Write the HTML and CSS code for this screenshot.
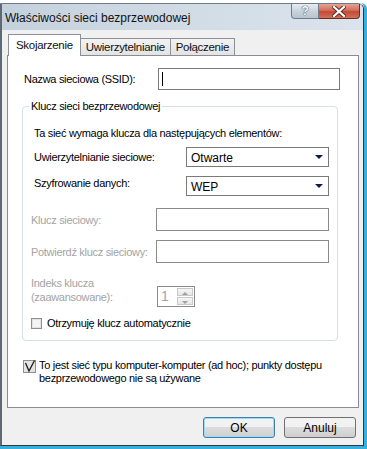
FILE: index.html
```html
<!DOCTYPE html>
<html>
<head>
    <meta charset="UTF-8">
    <title>Właściwości sieci bezprzewodowej</title>
    <link rel="stylesheet" href="styles.css">
</head>
<body>
<div class="top-strip"></div>
<div class="window">
    <div class="frame">
        <div class="titlebar">
            <span class="title">Właściwości sieci bezprzewodowej</span>
            <div class="caption-btns">
                <span class="btn-help">?</span>
                <span class="btn-close">
                    <svg width="14" height="11" viewBox="0 0 14 11">
                        <path d="M2 1 L12 10 M12 1 L2 10" stroke="#5a2a20" stroke-width="4" stroke-linecap="square"/>
                        <path d="M2 1 L12 10 M12 1 L2 10" stroke="#fff" stroke-width="2.2" stroke-linecap="square"/>
                    </svg>
                </span>
            </div>
        </div>

        <div class="content">
            <ul class="tabs">
                <li class="tab active">Skojarzenie</li>
                <li class="tab">Uwierzytelnianie</li>
                <li class="tab">Połączenie</li>
            </ul>

            <div class="panel">
                <div class="row ssid">
                    <label>Nazwa sieciowa (SSID):</label>
                    <div class="edit ssid-edit"><span class="caret"></span></div>
                </div>

                <div class="group">
                    <span class="legend">Klucz sieci bezprzewodowej</span>
                    <div class="intro">Ta sieć wymaga klucza dla następujących elementów:</div>

                    <div class="row r-auth">
                        <label>Uwierzytelnianie sieciowe:</label>
                        <div class="combo">Otwarte<span class="arrow"></span></div>
                    </div>
                    <div class="row r-enc">
                        <label>Szyfrowanie danych:</label>
                        <div class="combo">WEP<span class="arrow"></span></div>
                    </div>
                    <div class="row r-key">
                        <label class="disabled">Klucz sieciowy:</label>
                        <div class="edit key-edit"></div>
                    </div>
                    <div class="row r-confirm">
                        <label class="disabled">Potwierdź klucz sieciowy:</label>
                        <div class="edit key-edit"></div>
                    </div>
                    <div class="row r-index">
                        <label class="disabled">Indeks klucza<br>(zaawansowane):</label>
                        <div class="spin">
                            <span class="spin-val">1</span>
                            <div class="spin-btns">
                                <span class="spin-up"></span>
                                <span class="spin-down"></span>
                            </div>
                        </div>
                    </div>
                    <div class="row r-auto">
                        <span class="check auto-check"></span>
                        <span>Otrzymuję klucz automatycznie</span>
                    </div>
                </div>

                <div class="adhoc">
                    <span class="check adhoc-check">
                        <svg width="13" height="13" viewBox="0 0 13 13">
                            <path d="M2.5 3 L6 11 L11.5 0.5" fill="none" stroke="#1a1a1a" stroke-width="1.3"/>
                        </svg>
                    </span>
                    <span class="adhoc-text">To jest sieć typu komputer-komputer (ad hoc); punkty dostępu<br>bezprzewodowego nie są używane</span>
                </div>
            </div>

            <div class="buttons">
                <button class="btn default">OK</button>
                <button class="btn">Anuluj</button>
            </div>
        </div>
    </div>
</div>
</body>
</html>
```

FILE: styles.css
```css
* {
    margin: 0;
    padding: 0;
    box-sizing: border-box;
}

ul, li {
    list-style: none;
}

html, body {
    width: 100%;
    height: 100%;
    overflow: hidden;
}

body {
    background: #fff;
    font-family: "Liberation Sans", Arial, sans-serif;
    font-size: 11px;
    letter-spacing: -0.3px;
    color: #000;
}

.top-strip {
    height: 3px;
}

.window {
    width: 367px;
    height: 446px;
    border-right: 3px solid #38b0de;
    border-bottom: 3px solid #38b0de;
    border-top-right-radius: 6px;
}

.frame {
    height: 100%;
    display: flex;
    flex-direction: column;
    border-left: 2px solid #5d6a76;
    border-right: 1px solid #2e3a46;
    border-bottom: 1px solid #2e3a46;
    border-top: 1px solid #6d7c8a;
    border-top-right-radius: 6px;
    background: #f0f0f0;
}

/* title bar */
.titlebar {
    height: 26px;
    display: flex;
    justify-content: space-between;
    background: linear-gradient(to right, #c4d1dd, #d3dde7 60%, #dbe4ed);
    border-top-right-radius: 5px;
}

.title {
    padding: 7px 0 0 3px;
    font-size: 12px;
    letter-spacing: 0;
    color: #111;
}

.caption-btns {
    display: flex;
    margin-right: 3px;
    height: 15px;
}

.btn-help {
    width: 28px;
    height: 15px;
    border: 1px solid #707d8a;
    border-top: none;
    border-bottom-left-radius: 4px;
    background: linear-gradient(#e6ecf2, #c9d3dd 50%, #b8c4cf);
    color: #fff;
    font-weight: bold;
    font-size: 12px;
    text-align: center;
    line-height: 14px;
    text-shadow: 0 0 1px #333, 0 0 1px #333;
}

.btn-close {
    width: 41px;
    height: 15px;
    display: flex;
    align-items: center;
    justify-content: center;
    border: 1px solid #6e2c22;
    border-top: none;
    border-left: none;
    border-bottom-right-radius: 4px;
    background: linear-gradient(#e3a496, #d26f5c 45%, #c44a34 55%, #d0705a);
}

/* dialog content */
.content {
    flex: 1;
    padding: 4px 4px 0 5px;
    display: flex;
    flex-direction: column;
}

.tabs {
    display: flex;
    align-items: flex-end;
    height: 21px;
    padding-left: 1px;
    position: relative;
    z-index: 1;
}

.tab {
    height: 17px;
    padding: 2px 5px 0;
    border: 1px solid #8d9097;
    border-bottom: none;
    margin-left: -1px;
    background: linear-gradient(#f2f2f2, #e3e3e3);
    font-size: 11.5px;
    color: #111;
}

.tab.active {
    height: 22px;
    margin-bottom: -1px;
    padding: 4px 7px 0;
    background: #fff;
    margin-left: 0;
}

.tab.active + .tab {
    margin-left: 0;
    border-left: none;
}

.panel {
    height: 353px;
    border: 1px solid #898c95;
    background: #fff;
    padding: 12px 0 0 14px;
}

.row {
    display: flex;
    align-items: center;
}

.edit {
    border: 1px solid #7a7a7a;
    background: #fff;
}

.ssid {
    height: 22px;
}

.ssid label {
    width: 136px;
}

.ssid-edit {
    width: 182px;
    height: 22px;
    padding: 3px 0 0 3px;
}

.caret {
    display: block;
    width: 1px;
    height: 14px;
    background: #000;
}

/* group box */
.group {
    position: relative;
    margin-top: 16px;
    width: 316px;
    height: 235px;
    border: 1px solid #d5dfe5;
    border-radius: 4px;
    padding: 19px 0 0 9px;
}

.legend {
    position: absolute;
    left: 6px;
    top: -7px;
    padding: 0 2px;
    background: #fff;
    line-height: 13px;
}

.intro {
    height: 14px;
    line-height: 14px;
    padding-left: 2px;
}

.row label {
    padding-left: 2px;
}

.combo {
    position: relative;
    width: 143px;
    height: 20px;
    border: 1px solid #7a7a7a;
    padding: 3px 0 0 4px;
    font-size: 12px;
    letter-spacing: 0;
    line-height: 14px;
}

.arrow {
    position: absolute;
    right: 5px;
    top: 7px;
    border-left: 4px solid transparent;
    border-right: 4px solid transparent;
    border-top: 4px solid #0d1a4e;
}

.r-auth {
    margin-top: 7px;
    justify-content: space-between;
    width: 297px;
}

.r-enc {
    margin-top: 9px;
    justify-content: space-between;
    width: 297px;
    align-items: flex-start;
}

.r-enc label {
    padding-top: 1px;
}

.disabled {
    color: #a3a3a3;
}

.r-key, .r-confirm {
    justify-content: space-between;
    width: 297px;
}

.row .disabled {
    padding-left: 0;
    margin-left: -1px;
}

.r-key {
    margin-top: 12px;
}

.r-confirm {
    margin-top: 9px;
}

.key-edit {
    width: 173px;
    height: 23px;
    border-color: #8a8a8a;
}

.r-index {
    margin-top: 13px;
    height: 31px;
    align-items: flex-start;
}

.r-index label {
    width: 126px;
    line-height: 14px;
}

.spin {
    margin-top: 10px;
    width: 38px;
    height: 21px;
    display: flex;
    justify-content: space-between;
    border: 1px solid #8a8a8a;
    padding: 1px;
}

.spin-val {
    color: #a3a3a3;
    font-size: 14px;
    padding: 0 0 0 2px;
}

.spin-btns {
    width: 16px;
    display: flex;
    flex-direction: column;
    gap: 1px;
}

.spin-up, .spin-down {
    flex: 1;
    position: relative;
    border: 1px solid #c8c8c8;
    background: linear-gradient(#f6f6f6, #e6e6e6);
}

.spin-up::after, .spin-down::after {
    content: "";
    position: absolute;
    left: 4px;
    top: 3px;
    border-left: 3px solid transparent;
    border-right: 3px solid transparent;
}

.spin-up::after {
    border-bottom: 3px solid #a0a0a0;
}

.spin-down::after {
    border-top: 3px solid #a0a0a0;
}

.r-auto {
    margin-top: 9px;
    height: 14px;
}

.check {
    display: block;
    background: #f4f4f4;
}

.auto-check {
    width: 11px;
    height: 11px;
    margin: 0 5px 0 -1px;
    border: 1px solid #8e8f8f;
    box-shadow: inset 0 0 0 1px #e2e2e2;
}

/* ad hoc */
.adhoc {
    display: flex;
    align-items: flex-start;
    margin-top: 18px;
    margin-left: 1px;
}

.adhoc-check {
    position: relative;
    width: 13px;
    height: 13px;
    margin-top: 1px;
    border: 1px solid #8e8f8f;
    background: #e4e4e4;
}

.adhoc-check svg {
    display: block;
    margin: -1px 0 0 -1px;
}

.adhoc-text {
    padding-left: 3px;
    line-height: 13px;
}

/* buttons */
.buttons {
    display: flex;
    justify-content: flex-end;
    gap: 9px;
    padding: 9px 3px 0 0;
}

.btn {
    width: 72px;
    height: 21px;
    border: 1px solid #707070;
    border-radius: 3px;
    background: linear-gradient(#f2f2f2 45%, #dcdcdc 50%, #cfcfcf);
    font-family: "Liberation Sans", Arial, sans-serif;
    font-size: 12px;
    color: #000;
}

.btn.default {
    border-color: #3c7fb1;
    box-shadow: inset 0 0 0 1px #9fdaf4;
}
```
